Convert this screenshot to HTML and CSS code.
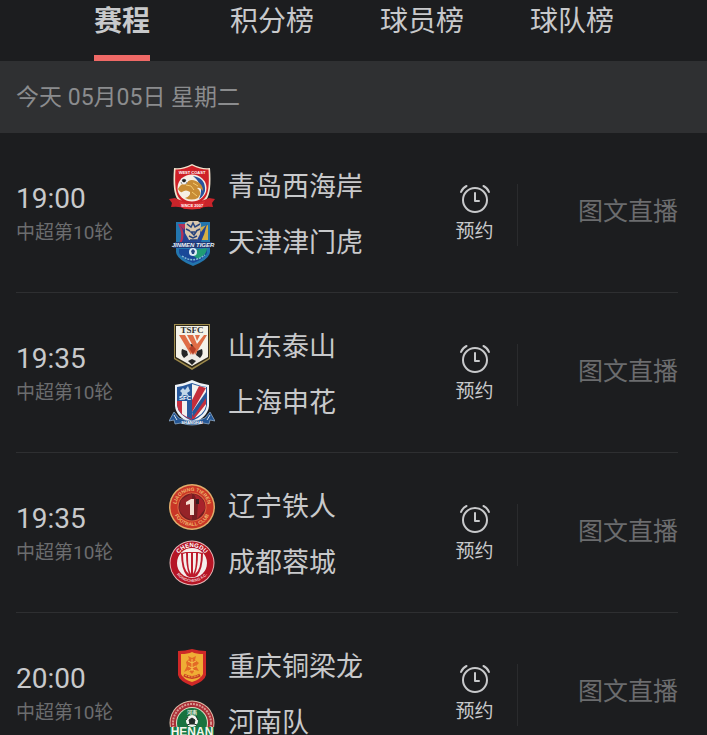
FILE: index.html
```html
<!DOCTYPE html>
<html lang="zh-CN">
<head>
    <meta charset="UTF-8">
    <meta name="viewport" content="width=device-width, initial-scale=1.0">
    <title>中超赛程</title>
    <link rel="stylesheet" href="styles.css">
</head>
<body>
    <!-- shared alarm clock icon -->
    <svg class="sprite" aria-hidden="true">
        <symbol id="clock" viewBox="0 0 30 30">
            <g fill="none" stroke="currentColor" stroke-width="2" stroke-linecap="round" stroke-linejoin="round">
                <circle cx="15" cy="16" r="12"/>
                <path d="M15 9v8h4"/>
                <path d="M1 8Q2.500 4 6.500 2M29 8Q27.500 4 23.500 2"/>
            </g>
        </symbol>
    </svg>

    <nav class="tabs">
        <a class="tab active" href="#schedule">赛程</a>
        <a class="tab" href="#standings">积分榜</a>
        <a class="tab" href="#players">球员榜</a>
        <a class="tab" href="#teams">球队榜</a>
    </nav>

    <main id="schedule">
        <h2 class="date">今天 05月05日 星期二</h2>

        <ul class="matches">
            <li class="match">
                <div class="info">
                    <time class="time">19:00</time>
                    <span class="round">中超第10轮</span>
                </div>
                <div class="teams">
                    <div class="team">
                        <svg class="logo" viewBox="0 0 46 46" aria-hidden="true">
                            <path d="M23 0Q32 5 41 4Q43 29 37 36Q31 42 23 44Q15 42 9 36Q3 29 5 4Q14 5 23 0Z" fill="#f3e3cd"/>
                            <path d="M23 1.500Q32 6 39.500 5.500Q41 28 36 34Q31 40 23 42Q15 40 10 34Q5 28 6.500 5.500Q14 6 23 1.500Z" fill="#cf2027"/>
                            <ellipse cx="23" cy="24" rx="14.500" ry="13.500" fill="#f6efe5"/>
                            <path d="M24 12Q37 14 36 27Q34 33 30 35Q36 22 24 12Z" fill="#28539b"/>
                            <path d="M9 25Q12 19 17 20Q20 14 27 17Q34 20 34 27Q31 23 28 24Q34 28 29 34Q23 37 16 34Q22 32 21 28Q17 25 13 28Q11 29 9 25Z" fill="#c88c35"/>
                            <path d="M17 21l5 1 3 4M24 19l5 3M23 28l5 4" fill="none" stroke="#f3c96d" stroke-width="1"/>
                            <circle cx="15" cy="17" r="3.500" fill="#f5f5f5"/>
                            <path d="M15 15l2 1-1 2h-2l-1-2zM12 18l1 2M18 18l-1 2" fill="#222" stroke="#222" stroke-width=".5"/>
                            <path d="M0 35L6 34Q23 42 40 34L46 35L43 39L44 43Q34 42 31 45H15Q12 42 2 43L3 39Z" fill="#c9242a"/>
                            <path d="M10 37Q23 43 36 37L34 43Q23 48 12 43Z" fill="#df2d31"/>
                            <text class="crest-text" x="23" y="10" font-size="4" fill="#fff">WEST COAST</text>
                            <text class="crest-text" x="23" y="43" font-size="4" fill="#fff">SINCE 2007</text>
                        </svg>
                        <span>青岛西海岸</span>
                    </div>
                    <div class="team">
                        <svg class="logo" viewBox="0 0 46 46" aria-hidden="true">
                            <path d="M7 2H41V32Q40 40 24 46Q8 40 7 32Z" fill="#2376ae"/>
                            <path d="M9 4H21V23H10Q15 15 9 4Z" fill="#b62f56"/>
                            <path d="M39 5V20H28L32 7Z" fill="#d3ae45"/>
                            <path d="M10 4Q18 13 12 24H31Q36 14 38 4L32 12 29 4H17L15 10Z" fill="#234494"/>
                            <path d="M16 3L20 1H29L32 4 31 14 28 20H20L16 13Z" fill="#d9c7ad"/>
                            <path d="M18 4l4 3 2-4 2 4 5-3M17 9l4 2M31 9l-4 2M22 12h5l-2 3zM20 16l4 2 4-2M21 20h7" fill="none" stroke="#28447c" stroke-width="1.500"/>
                            <path d="M10 29H38V33Q34 40 24 43Q13 39 10 33Z" fill="#1a4898"/>
                            <path d="M25 30L38 28Q38 35 29 39L23 35Z" fill="#209d75"/>
                            <path d="M13 36Q24 44 36 35" fill="none" stroke="#82bdd5" stroke-width="1.500" stroke-dasharray="2 1"/>
                            <path d="M6 22H43L41 28H4Z" fill="#203a76"/>
                            <text class="crest-text slanted" x="24" y="27" font-size="6" fill="#e9f0f5">JINMEN TIGER</text>
                            <circle cx="24" cy="32" r="4" fill="#dce9f3"/>
                            <path d="M24 29l2 2-1 3h-2l-1-3z" fill="#244581"/>
                        </svg>
                        <span>天津津门虎</span>
                    </div>
                </div>
                <button class="remind" type="button">
                    <svg class="clock" aria-hidden="true"><use href="#clock"/></svg>
                    <span>预约</span>
                </button>
                <a class="live" href="#live">图文直播</a>
            </li>

            <li class="match">
                <div class="info">
                    <time class="time">19:35</time>
                    <span class="round">中超第10轮</span>
                </div>
                <div class="teams">
                    <div class="team">
                        <svg class="logo" viewBox="0 0 46 46" aria-hidden="true">
                            <path d="M5 0H41V35L23 46 5 35Z" fill="#9d8a4c"/>
                            <path d="M6 1H40V34L23 44 6 34Z" fill="#302918"/>
                            <path d="M7 2H39V33L23 42 7 33Z" fill="#f4f2e9"/>
                            <text class="crest-text serif" x="23" y="9" font-size="9" fill="#333">TSFC</text>
                            <circle cx="23" cy="30" r="10" fill="#eceae5"/>
                            <path d="M19 21l4-1 4 1-2 4-3 2zM13 25l5 2 1 4-4 3q-4-4-2-9zM33 25l-5 2-1 4 4 3q4-4 2-9zM19 37l4-2 4 2-4 4z" fill="#242526"/>
                            <path d="M10 11H16L24 25 22 31ZM18 11H24L28 20 25 24ZM26 11H31L28 17ZM35 11H38L26 31 24 25Z" fill="#df6d46"/>
                            <path d="M20 24l4 7 3-6-3-3z" fill="#b64027"/>
                        </svg>
                        <span>山东泰山</span>
                    </div>
                    <div class="team">
                        <svg class="logo" viewBox="0 0 46 46" aria-hidden="true">
                            <path d="M6 5Q15 4 23 0Q31 4 40 5V26Q39 37 23 44Q7 37 6 26Z" fill="#edf2f7"/>
                            <path d="M8 7Q15 6 23 3Q31 6 38 7V25Q37 35 23 41Q9 35 8 25Z" fill="#26579b"/>
                            <path d="M23 4Q31 7 37 7V26Q35 35 23 39Z" fill="#f4f1ee"/>
                            <path d="M30 6L37 8 23 32V20ZM37 16V24L25 39H23V35Z" fill="#c42e3c"/>
                            <path d="M23 32L37 12V18L24 37Z" fill="#275698"/>
                            <path d="M8 21H23V40Q9 35 8 25Z" fill="#c73041"/>
                            <path d="M13 21H18V37L13 34Z" fill="#f3f2ef"/>
                            <path d="M18 21H23V39L18 37Z" fill="#28599c"/>
                            <path d="M11 11l3-3 2 2 3-4 2 5-3 2 2 3-5-1-3 2 1-4z" fill="#c1d6e8"/>
                            <text class="crest-text" x="16" y="20" font-size="6" fill="#fff">SFC</text>
                            <path d="M0 41L5 32 10 38Q23 44 36 38L41 32 46 41 41 40 40 44 34 43Q23 47 12 43L6 44 5 40Z" fill="#255795" stroke="#9cb8d3" stroke-width=".7"/>
                            <text class="crest-text" x="23" y="44" font-size="4" fill="#fff">SHANGHAI</text>
                            <path d="M5 35l3 5M41 35l-3 5" stroke="#d9e4ed" stroke-width="1"/>
                        </svg>
                        <span>上海申花</span>
                    </div>
                </div>
                <button class="remind" type="button">
                    <svg class="clock" aria-hidden="true"><use href="#clock"/></svg>
                    <span>预约</span>
                </button>
                <a class="live" href="#live">图文直播</a>
            </li>

            <li class="match">
                <div class="info">
                    <time class="time">19:35</time>
                    <span class="round">中超第10轮</span>
                </div>
                <div class="teams">
                    <div class="team">
                        <svg class="logo" viewBox="0 0 46 46" aria-hidden="true">
                            <defs>
                                <path id="liaoningTop" d="M7 23A16 16 0 0 1 39 23"/>
                                <path id="liaoningBottom" d="M4 23A19 19 0 0 0 42 23"/>
                            </defs>
                            <circle cx="23" cy="23" r="23" fill="#e0ad6b"/>
                            <circle cx="23" cy="23" r="21.500" fill="#c93626"/>
                            <circle cx="23" cy="23" r="14.500" fill="#e06b44"/>
                            <circle cx="23" cy="23" r="13.500" fill="#741e22"/>
                            <path d="M12 16L23 9V36Q13 33 10 25Z" fill="#962328"/>
                            <path d="M25 10Q37 14 36 25L28 35 29 19Z" fill="#a8232b"/>
                            <path d="M17 18L22 15H25V31H21V20L17 21Z" fill="#f5ddd2"/>
                            <path d="M27 15h3v5h-3z" fill="#351c20"/>
                            <text class="crest-text" font-size="5" fill="#f0b56d"><textPath href="#liaoningTop" startOffset="50%">LIAONING TIEREN</textPath></text>
                            <text class="crest-text" font-size="5" fill="#f0b56d"><textPath href="#liaoningBottom" startOffset="50%">FOOTBALL CLUB</textPath></text>
                        </svg>
                        <span>辽宁铁人</span>
                    </div>
                    <div class="team">
                        <svg class="logo" viewBox="0 0 46 46" aria-hidden="true">
                            <defs>
                                <path id="chengduTop" d="M7 23A16 16 0 0 1 39 23"/>
                                <path id="chengduBottom" d="M4 23A19 19 0 0 0 42 23"/>
                            </defs>
                            <circle cx="23" cy="23" r="22.500" fill="#e8b8b8"/>
                            <circle cx="23" cy="23" r="21.500" fill="#b51525"/>
                            <circle cx="23" cy="23" r="15" fill="#f4eeec"/>
                            <path d="M12 13Q12 29 18 36Q22 38 23 37Q24 38 28 36Q34 29 34 13L29 12H17Z" fill="#bd1b2c"/>
                            <path d="M14 14L17 13Q17 27 20 34Q14 30 14 14ZM32 14L29 13Q29 27 26 34Q32 30 32 14Z" fill="#f5f0ed"/>
                            <path d="M19 13H22V34Q19 30 19 17ZM27 13H24V34Q27 30 27 17Z" fill="#f5f0ed"/>
                            <text class="crest-text" font-size="6" fill="#fff"><textPath href="#chengduTop" startOffset="50%">CHENGDU</textPath></text>
                            <text class="crest-text" font-size="4" fill="#f3cccc"><textPath href="#chengduBottom" startOffset="50%">RONGCHENG F.C.</textPath></text>
                        </svg>
                        <span>成都蓉城</span>
                    </div>
                </div>
                <button class="remind" type="button">
                    <svg class="clock" aria-hidden="true"><use href="#clock"/></svg>
                    <span>预约</span>
                </button>
                <a class="live" href="#live">图文直播</a>
            </li>

            <li class="match">
                <div class="info">
                    <time class="time">20:00</time>
                    <span class="round">中超第10轮</span>
                </div>
                <div class="teams">
                    <div class="team">
                        <svg class="logo" viewBox="0 0 46 46" aria-hidden="true">
                            <path d="M9 7Q16 7 23 5Q30 7 37 7V31Q36 37 23 42Q10 37 9 31Z" fill="#cf2827"/>
                            <path d="M12 10Q19 10 23 8Q27 10 34 10V30Q32 35 23 38Q14 35 12 30Z" fill="#efad35"/>
                            <path d="M17 18l3-3-1-3 4 2 4-2-1 4 4 3-3 3 3 5-4-1-3 4-4-4-4 2 3-6z" fill="#e36a26"/>
                            <path d="M19 17l4 2 4-2M19 22l4 2 4-2M20 27l3-2 3 2M23 15v12" fill="none" stroke="#f7c64b" stroke-width="1"/>
                            <path d="M15 31Q23 36 31 31" fill="none" stroke="#c83b24" stroke-width="3"/>
                            <path d="M16 31Q23 35 30 31" fill="none" stroke="#f2b43c" stroke-width="1" stroke-dasharray="2 1"/>
                        </svg>
                        <span>重庆铜梁龙</span>
                    </div>
                    <div class="team">
                        <svg class="logo" viewBox="0 0 46 46" aria-hidden="true">
                            <circle cx="23" cy="23" r="22.500" fill="#ddc0ac"/>
                            <circle cx="23" cy="23" r="21.500" fill="#a92d35"/>
                            <circle cx="23" cy="23" r="19" fill="none" stroke="#d99a92" stroke-width="2" stroke-dasharray="2 1"/>
                            <circle cx="23" cy="23" r="16" fill="#d9dfc5"/>
                            <circle cx="23" cy="23" r="15" fill="#18733f"/>
                            <text class="crest-text" x="23" y="14" font-size="5" fill="#f2f2e4">河南</text>
                            <circle cx="23" cy="21" r="6" fill="#f4f4ef"/>
                            <path d="M23 18l3 2-1 4h-4l-1-4zM17 20l2-3M27 16l2 4M18 25l3-1M25 24l3 1" fill="#202b27" stroke="#202b27" stroke-width="1"/>
                            <path d="M1 27H45V38H1Z" fill="#167b45"/>
                            <text class="crest-text" x="23" y="36" font-size="12" fill="#f3f5eb">HENAN</text>
                        </svg>
                        <span>河南队</span>
                    </div>
                </div>
                <button class="remind" type="button">
                    <svg class="clock" aria-hidden="true"><use href="#clock"/></svg>
                    <span>预约</span>
                </button>
                <a class="live" href="#live">图文直播</a>
            </li>
        </ul>
    </main>
</body>
</html>
```
FILE: styles.css
```css
* {
    box-sizing: border-box;
}

body {
    margin: 0;
    background-color: #1c1d1f;
    color: #c8c9cb;
    font-family: Roboto, "Noto Sans CJK SC", sans-serif;
}

a {
    color: inherit;
    text-decoration: none;
}

.sprite {
    display: none;
}

/* Tabs */
.tabs {
    display: grid;
    grid-template-columns: repeat(4, 1fr);
    justify-items: center;
    height: 61px;
    padding: 0 60px 0 47px;
}

.tab {
    font-size: 28px;
    line-height: 44px;
}

.tab.active {
    font-weight: 700;
    border-bottom: 6px solid #ef6966;
}

/* Date bar */
.date {
    margin: 0;
    padding: 2px 16px 0;
    background-color: #2f3032;
    color: #8b8c8e;
    font-size: 23px;
    font-weight: 400;
    line-height: 70px;
}

/* Match list */
.matches {
    list-style: none;
    margin: 0;
    padding: 0 29px 0 16px;
}

.match {
    display: grid;
    grid-template-columns: 153px 1fr 86px 160px;
    align-items: center;
    height: 160px;
    padding-top: 4px;
    border-bottom: 1px solid #2e2f31;
}

.info {
    display: flex;
    flex-direction: column;
}

.time {
    font-size: 28px;
    line-height: 36px;
}

.round {
    color: #6b6c6e;
    font-size: 19px;
    line-height: 32px;
}

.teams {
    display: flex;
    flex-direction: column;
    gap: 10px;
}

.team {
    display: flex;
    align-items: center;
    gap: 13px;
    font-size: 27px;
    line-height: 46px;
    white-space: nowrap;
}

.logo {
    flex: none;
    width: 46px;
    height: 46px;
}

.crest-text {
    font-family: "Liberation Sans", "Noto Sans CJK SC", sans-serif;
    font-weight: 700;
    text-anchor: middle;
}

.crest-text.serif {
    font-family: "Liberation Serif", serif;
}

.crest-text.slanted {
    font-style: italic;
}

.remind {
    display: flex;
    flex-direction: column;
    align-items: center;
    gap: 4px;
    padding: 0;
    border: none;
    border-right: 1px solid #2a2b2d;
    background: none;
    color: inherit;
    font-family: inherit;
    font-size: 19px;
    line-height: 28px;
    cursor: pointer;
}

.clock {
    width: 30px;
    height: 30px;
}

.live {
    padding-bottom: 12px;
    color: #6b6c6e;
    font-size: 25px;
    text-align: right;
}
```
